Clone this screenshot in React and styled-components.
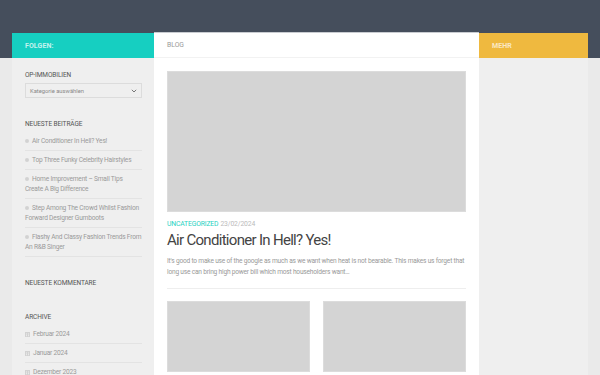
import React from "react";
import styled, { createGlobalStyle } from "styled-components";

const GlobalStyle = createGlobalStyle`
  body {
    margin: 0;
    background: #eaeaea;
    font-family: "Roboto", "Liberation Sans", sans-serif;
  }
`;

const posts = [
  "Air Conditioner In Hell? Yes!",
  "Top Three Funky Celebrity Hairstyles",
  "Home Improvement – Small Tips Create A Big Difference",
  "Step Among The Crowd Whilst Fashion Forward Designer Gumboots",
  "Flashy And Classy Fashion Trends From An R&B Singer",
];

const archive = ["Februar 2024", "Januar 2024", "Dezember 2023"];

export default function App() {
  return (
    <>
      <GlobalStyle />
      <TopBar />
      <Wrapper>
        <Container>
          <Sidebar>
            <ColumnHead $bg="#16cfc1" $color="rgba(255,255,255,0.75)">FOLGEN:</ColumnHead>
            <SidebarBody>
              <Widget>
                <WidgetTitle>OP-IMMOBILIEN</WidgetTitle>
                <Select>
                  <span>Kategorie auswählen</span>
                  <svg width="6" height="4" viewBox="0 0 6 4">
                    <path d="M0.8 0.8 L3 3 L5.2 0.8" stroke="#777" strokeWidth="1" fill="none" />
                  </svg>
                </Select>
              </Widget>
              <Widget>
                <WidgetTitle>NEUESTE BEITRÄGE</WidgetTitle>
                <List>
                  {posts.map((p) => (
                    <Item key={p}>
                      <Dot />
                      {p}
                    </Item>
                  ))}
                </List>
              </Widget>
              <Widget>
                <WidgetTitle>NEUESTE KOMMENTARE</WidgetTitle>
              </Widget>
              <Widget>
                <WidgetTitle>ARCHIVE</WidgetTitle>
                <List>
                  {archive.map((a) => (
                    <Item key={a}>
                      <CalIcon width="5" height="5" viewBox="0 0 5 5">
                        <rect x="0" y="0" width="5" height="5" fill="#d2d2d2" />
                        <rect x="1" y="1.5" width="1" height="1" fill="#efefef" />
                        <rect x="3" y="1.5" width="1" height="1" fill="#efefef" />
                        <rect x="1" y="3.2" width="1" height="1" fill="#efefef" />
                        <rect x="3" y="3.2" width="1" height="1" fill="#efefef" />
                      </CalIcon>
                      {a}
                    </Item>
                  ))}
                </List>
              </Widget>
            </SidebarBody>
          </Sidebar>

          <Main>
            <MainHead>BLOG</MainHead>
            <MainBody>
              <Thumb $h={141} />
              <Meta>
                <Category>UNCATEGORIZED</Category>
                <DateText>23/02/2024</DateText>
              </Meta>
              <PostTitle>Air Conditioner In Hell? Yes!</PostTitle>
              <Excerpt>
                It's good to make use of the google as much as we want when heat is not bearable. This makes us forget
                that long use can bring high power bill which most householders want…
              </Excerpt>
              <Divider />
              <Grid>
                <Thumb $h={71} />
                <Thumb $h={71} />
              </Grid>
            </MainBody>
          </Main>

          <Sidebar>
            <ColumnHead $bg="#efb93f" $color="rgba(255,255,255,0.7)">MEHR</ColumnHead>
          </Sidebar>
        </Container>
      </Wrapper>
    </>
  );
}

const TopBar = styled.div`
  height: 33px;
  background: #454e5c;
`;

const Wrapper = styled.div`
  padding: 0 12px;
  min-height: 342px;
  background: linear-gradient(#454e5c 25px, #eaeaea 25px);
`;

const Container = styled.div`
  display: grid;
  grid-template-columns: 142px 325px 109px;
  min-height: 342px;
  align-items: stretch;
`;

const Sidebar = styled.aside`
  display: flex;
  flex-direction: column;
  background: #efefef;
`;

const ColumnHead = styled.div`
  height: 25px;
  flex: none;
  display: flex;
  align-items: center;
  padding-left: 13px;
  background: ${({ $bg }) => $bg};
  color: ${({ $color }) => $color};
  font-size: 7px;
  font-weight: 700;
  letter-spacing: 0.1px;
`;

const SidebarBody = styled.div`
  padding: 12px 12px 0 13px;
`;

const Widget = styled.section`
  padding-bottom: 21px;
`;

const WidgetTitle = styled.h3`
  margin: 0 0 3px;
  font-size: 6.5px;
  line-height: 10px;
  font-weight: 400;
  letter-spacing: -0.1px;
  color: #555;
`;

const Select = styled.div`
  height: 15px;
  box-sizing: border-box;
  border: 1px solid #dcdcdc;
  display: flex;
  align-items: center;
  justify-content: space-between;
  padding: 0 4px;
  font-size: 5.8px;
  color: #888;
`;

const List = styled.ul`
  list-style: none;
  margin: 0;
  padding: 0;
`;

const Item = styled.li`
  padding: 4px 0;
  border-bottom: 1px solid #e3e3e3;
  font-size: 6.6px;
  line-height: 10px;
  letter-spacing: -0.2px;
  color: #9a9a9a;
`;

const Dot = styled.span`
  display: inline-block;
  width: 4px;
  height: 4px;
  border-radius: 50%;
  background: #d2d2d2;
  margin-right: 3px;
  vertical-align: 0.5px;
`;

const CalIcon = styled.svg`
  margin-right: 3px;
  vertical-align: -0.5px;
`;

const Main = styled.main`
  background: #fff;
  box-shadow: 0 -1px 0 #c9ccd1;
`;

const MainHead = styled.div`
  height: 25px;
  display: flex;
  align-items: center;
  padding-left: 13px;
  border-bottom: 1px solid #f2f2f2;
  box-sizing: border-box;
  font-size: 6.8px;
  color: #999;
`;

const MainBody = styled.div`
  padding: 13px 13px 0;
`;

const Thumb = styled.div`
  height: ${({ $h }) => $h}px;
  background: #d4d4d4;
  border: 1px solid #dcdcdc;
  box-sizing: border-box;
`;

const Meta = styled.div`
  margin-top: 8px;
  font-size: 6.8px;
  line-height: 8px;
  letter-spacing: -0.15px;
  display: flex;
  gap: 2px;
`;

const Category = styled.span`
  color: #1fd1c2;
`;

const DateText = styled.span`
  color: #bbb;
`;

const PostTitle = styled.h2`
  margin: 2px 0 6px;
  font-size: 15px;
  line-height: 20px;
  font-weight: 400;
  letter-spacing: -0.7px;
  color: #444;
`;

const Excerpt = styled.p`
  margin: 0;
  font-size: 6.6px;
  line-height: 11px;
  letter-spacing: -0.2px;
  color: #999;
`;

const Divider = styled.hr`
  border: none;
  border-top: 1px solid #eeeeee;
  margin: 10px 0 12px;
`;

const Grid = styled.div`
  display: grid;
  grid-template-columns: 1fr 1fr;
  gap: 13px;
`;
